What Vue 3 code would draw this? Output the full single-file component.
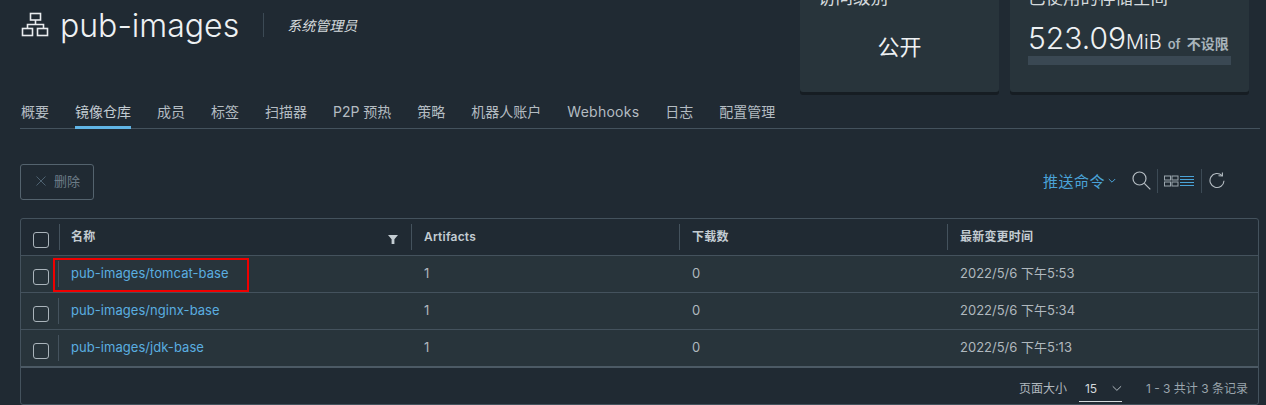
<template>
  <div class="page">
    <header class="head">
      <div class="title-box">
        <svg class="logo" width="28" height="28" viewBox="0 0 28 28" fill="none" stroke="#e9ecef" stroke-width="1.6">
          <rect x="9.5" y="2.5" width="10" height="6.5" />
          <path d="M14.5 9v4.5M6.5 17v-3.500h16V17" />
          <rect x="1.500" y="17.500" width="10" height="7" />
          <rect x="16.500" y="17.500" width="10" height="7" />
        </svg>
        <h1>pub-images</h1>
        <span class="divider"></span>
        <em class="role">系统管理员</em>
      </div>
      <div class="cards">
        <div class="card access">
          <div class="card-title">访问级别</div>
          <div class="access-val">公开</div>
        </div>
        <div class="card storage">
          <div class="card-title">已使用的存储空间</div>
          <div class="usage"><span class="num">523.09</span><span class="unit">MiB</span><span class="of">of</span><span class="limit">不设限</span></div>
          <div class="bar"></div>
        </div>
      </div>
    </header>

    <nav class="tabs">
      <a v-for="t in tabs" :key="t" class="tab" :class="{ active: t === '镜像仓库', wide: t === 'Webhooks' }">{{ t }}</a>
    </nav>

    <div class="toolbar">
      <button class="del">
        <svg width="10" height="10" viewBox="0 0 10 10" stroke="#4d6170" stroke-width="1"><path d="M.5.5l9 9M9.500.5l-9 9" /></svg>
        <span>删除</span>
      </button>
      <div class="tools">
        <span class="push">推送命令</span>
        <svg class="caret" width="8" height="6" viewBox="0 0 8 6" fill="none" stroke="#4aa3d8"><path d="M.8 1l3.2 3.2L7.2 1" /></svg>
        <svg class="search" width="19" height="19" viewBox="0 0 19 19" fill="none" stroke="#b4bcc2" stroke-width="1.2">
          <circle cx="7.500" cy="7.500" r="6.500" /><path d="M12.300 12.300l6 6" />
        </svg>
        <span class="sep"></span>
        <svg class="grid-ico" width="15" height="12" viewBox="0 0 15 12" fill="none" stroke="#9aa5ad"><rect x=".5" y="1" width="6" height="4" /><rect x="8" y="1" width="6" height="4" /><rect x=".5" y="7" width="6" height="4" /><rect x="8" y="7" width="6" height="4" /></svg>
        <svg class="list-ico" width="14" height="12" viewBox="0 0 14 12" stroke="#4aa3d8"><path d="M0 1.500h14M0 4.500h14M0 7.500h14M0 10.500h14" /></svg>
        <span class="sep second"></span>
        <svg class="refresh" width="16" height="17" viewBox="0 0 16 17" fill="none" stroke="#b4bcc2" stroke-width="1.1">
          <path d="M13 3.600A7 7 0 1 0 15 8.800" /><path d="M9.500 3.800L13.400 4V.4" />
        </svg>
      </div>
    </div>

    <div class="grid">
      <div class="row header">
        <div class="check-cell"><span class="box"></span></div>
        <div class="cell name">名称
          <svg class="filter" width="10" height="9" viewBox="0 0 10 9" fill="#c3ccd2"><path d="M0 0h10L6.400 4.200V9H3.600V4.200z" /></svg>
        </div>
        <div class="cell">Artifacts</div>
        <div class="cell">下载数</div>
        <div class="cell last">最新变更时间</div>
      </div>
      <div v-for="r in repos" :key="r.name" class="row body">
        <div class="check-cell"><span class="box"></span></div>
        <div class="cell name"><a class="link">{{ r.name }}</a></div>
        <div class="cell">1</div>
        <div class="cell">0</div>
        <div class="cell last">{{ r.time }}</div>
      </div>
      <footer class="foot">
        <span class="psize">页面大小</span>
        <span class="select">15
          <svg width="11" height="7" viewBox="0 0 11 7" fill="none" stroke="#c3ccd2"><path d="M.8 1l4.700 4.600L10.200 1" /></svg>
        </span>
        <span class="count">1 - 3 共计 3 条记录</span>
      </footer>
      <div class="mark"></div>
    </div>
  </div>
</template>

<script setup>
const tabs = ['概要', '镜像仓库', '成员', '标签', '扫描器', 'P2P 预热', '策略', '机器人账户', 'Webhooks', '日志', '配置管理']

const repos = [
  { name: 'pub-images/tomcat-base', time: '2022/5/6 下午5:53' },
  { name: 'pub-images/nginx-base', time: '2022/5/6 下午5:34' },
  { name: 'pub-images/jdk-base', time: '2022/5/6 下午5:13' }
]
</script>

<style>
html, body { margin: 0; background: #202a33; overflow: hidden; }
</style>

<style scoped>
.page {
  width: 1266px; height: 405px; overflow: hidden; box-sizing: border-box;
  padding: 0 7px 0 20px; background: #202a33; color: #c3ccd2;
  font-family: Inter, "Noto Sans CJK SC", sans-serif; font-size: 13px;
}
.head { display: flex; justify-content: space-between; height: 92px; padding-right: 10px; }
.title-box { display: flex; align-items: center; height: 50px; }
.logo { margin: 0 11px 0 1px; }
h1 { margin: 0; font-size: 32px; font-weight: 300; color: #eef1f3; }
.divider { width: 1px; height: 24px; background: #3c4a55; margin: 0 24px; }
.role { font-size: 14px; color: #d5dadd; margin-left: -1px; }
.cards { display: flex; gap: 11px; margin-top: -12px; }
.card {
  height: 104px; box-sizing: border-box; background: #28343b; border-radius: 3px;
  box-shadow: 0 3px 0 #161d23; padding: 0 18px; position: relative;
}
.access { width: 199px; }
.storage { width: 239px; }
.card-title { font-size: 17.500px; line-height: 20px; color: #d5dadd; }
.access-val { text-align: center; font-size: 22px; color: #eef1f3; margin-top: 24px; line-height: 30px; }
.usage { display: flex; align-items: baseline; margin-top: 11px; line-height: 38px; color: #eef1f3; }
.num { font-size: 30px; font-weight: 300; }
.unit { font-size: 20px; font-weight: 300; }
.of { font-size: 13px; font-weight: 600; color: #a9b4bb; margin: 0 6px; }
.limit { font-size: 14px; font-weight: 700; color: #a9b4bb; }
.bar { height: 9px; background: #3a4853; margin-top: -7px; }

.tabs {
  display: flex; gap: 26px; height: 36px; align-items: flex-end; padding-left: 1px;
  border-bottom: 1px solid #44525d; margin-right: -1px;
}
.tab {
  font-size: 14px; line-height: 26px; height: 30px; margin-bottom: -1px; box-sizing: border-box;
  color: #b4bcc2; border-bottom: 3px solid transparent;
}
.tab.wide { letter-spacing: .25px; }
.tab.active { color: #c3ccd2; border-bottom-color: #60b5e6; }

.toolbar { display: flex; justify-content: space-between; align-items: center; height: 36px; margin-top: 35px; padding-right: 34px; }
.del {
  width: 74px; height: 36px; border: 1px solid #54636e; border-radius: 3px; background: none;
  display: flex; align-items: center; justify-content: center; gap: 8px; padding: 0 0 3px 2px;
  color: #6c7c87; font: inherit; font-size: 13px;
}
.tools { display: flex; align-items: center; margin-top: -3px; }
.push { color: #4aa3d8; font-size: 15px; letter-spacing: .5px; margin-right: -1px; }
.caret { margin-left: 4px; }
.search { margin-left: 16px; }
.sep { width: 1px; height: 24px; background: #3c4a55; margin: 0 6px 0 6px; }
.sep.second { margin: 0 7px 0 7px; }
.list-ico { margin-left: 1px; }

.grid {
  position: relative; margin-top: 18px; border: 1px solid #44525d; border-radius: 3px;
  height: 187px; box-sizing: border-box; width: 1239px;
}
.row { display: grid; grid-template-columns: 38px 352px 268px 268px 1fr; align-items: center; height: 37px; box-sizing: border-box; border-bottom: 1px solid #44525d; }
.body { background: #28343b; }
.body .cell { color: #b0b8be; line-height: 24px; }
.body .cell:not(.name) { border-left-color: transparent; }
.body .name { margin-left: -1px; }
.row:nth-child(4) { height: 38px; border-bottom-width: 2px; border-bottom-color: #4c5a65; }
.check-cell { display: flex; justify-content: center; padding-top: 5px; padding-left: 2px; }
.box { width: 14px; height: 14px; border: 1px solid #aab4bb; border-radius: 3px; display: block; }
.cell { height: 26px; line-height: 26px; padding-left: 12px; border-left: 1px solid #44525d; position: relative; }
.header .cell { font-size: 12px; font-weight: 600; color: #c3ccd2; letter-spacing: .2px; }
.header .name { padding-left: 11px; }
.filter { position: absolute; right: 13px; top: 11px; }
.link { color: #5aaee0; font-size: 13px; letter-spacing: .05px; }
.foot { display: flex; justify-content: flex-end; align-items: center; height: 36px; padding: 2px 10px 0 0; box-sizing: border-box; font-size: 12px; color: #b0b8be; }
.select {
  width: 43px; height: 30px; box-sizing: border-box; border-bottom: 1px solid #d5dadd;
  margin: 0 24px 0 12px; padding: 3px 0 0 6px; display: flex; align-items: center; gap: 15px; color: #d5dadd;
}
.count { color: #9aa5ad; }
.mark { position: absolute; left: 32px; top: 39px; width: 196px; height: 34px; border: 2px solid #f00000; box-sizing: border-box; }
</style>
